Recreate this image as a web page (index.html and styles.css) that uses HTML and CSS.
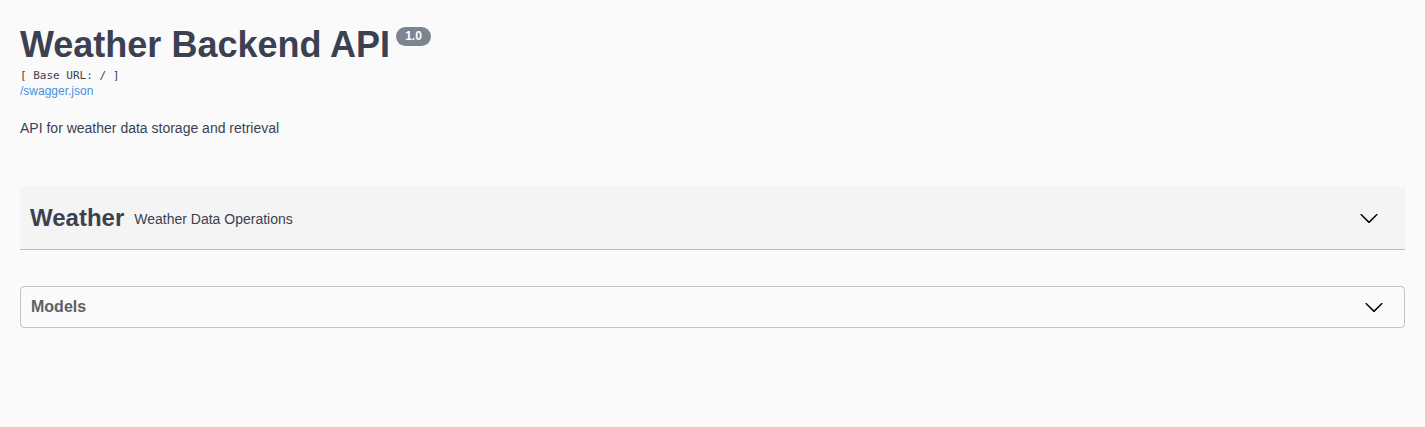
FILE: index.html
```html
<!DOCTYPE html>
<html lang="en">
<head>
<meta charset="utf-8">
<title>Weather Backend API</title>
<link rel="stylesheet" href="styles.css">
</head>
<body>
<div class="wrapper">
  <div class="info">
    <div class="title-row">
      <h2 class="title">Weather Backend API</h2>
      <span class="version">1.0</span>
    </div>
    <pre class="base-url">[ Base URL: / ]</pre>
    <a class="spec-link" href="#">/swagger.json</a>
    <p class="description">API for weather data storage and retrieval</p>
  </div>

  <div class="tag">
    <h3 class="tag-name">Weather</h3>
    <span class="tag-desc">Weather Data Operations</span>
    <span class="spacer"></span>
    <svg class="chevron chevron-tag" viewBox="0 0 20 20" width="20" height="20"><path d="M17.418 6.109c.272-.268.709-.268.979 0s.271.701 0 .969l-7.908 7.830c-.27.268-.707.268-.979 0l-7.908-7.830c-.27-.268-.27-.701 0-.969.271-.268.709-.268.979 0L10 13.25l7.418-7.141z"/></svg>
  </div>

  <div class="models">
    <h4 class="models-title">Models</h4>
    <svg class="chevron" viewBox="0 0 20 20" width="20" height="20"><path d="M17.418 6.109c.272-.268.709-.268.979 0s.271.701 0 .969l-7.908 7.830c-.27.268-.707.268-.979 0l-7.908-7.830c-.27-.268-.27-.701 0-.969.271-.268.709-.268.979 0L10 13.25l7.418-7.141z"/></svg>
  </div>
</div>
</body>
</html>
```

FILE: styles.css
```css
html, body {
  margin: 0;
  padding: 0;
  background: #fafafa;
}

body {
  font-family: "Liberation Sans", Arial, sans-serif;
  color: #3b4151;
}

.wrapper {
  padding: 0 20px;
}

.info {
  padding-top: 24px;
}

.title-row {
  display: flex;
  align-items: flex-start;
}

.title {
  margin: 0;
  font-size: 36px;
  font-weight: 700;
  line-height: 41px;
  color: #3b4151;
}

.version {
  margin: 3px 0 0 6px;
  padding: 2px 9px;
  font-size: 12px;
  font-weight: 700;
  line-height: 15px;
  color: #fff;
  background: #7d8492;
  border-radius: 57px;
}

.base-url {
  margin: 4px 0 0;
  font-family: "DejaVu Sans Mono", "Liberation Mono", monospace;
  font-size: 11px;
  line-height: 14px;
  color: #3b4151;
}

.spec-link {
  display: block;
  margin-top: 1px;
  font-size: 12px;
  line-height: 14px;
  color: #4990e2;
  text-decoration: none;
}

.description {
  margin: 22px 0 0;
  font-size: 14px;
  line-height: 16px;
  color: #3b4151;
}

.tag {
  display: flex;
  align-items: center;
  margin-top: 50px;
  height: 63px;
  padding: 0 26px 0 10px;
  background: #f4f4f4;
  border-bottom: 1px solid rgba(59, 65, 81, 0.3);
}

.tag-name {
  margin: 0;
  font-size: 24px;
  font-weight: 700;
  color: #3b4151;
  line-height: 28px;
}

.tag-desc {
  margin-left: 10px;
  font-size: 14px;
  color: #3b4151;
  line-height: 16px;
  padding-top: 2px;
}

.spacer {
  flex: 1;
}

.chevron {
  display: block;
  fill: #000;
}

.models {
  display: flex;
  align-items: center;
  justify-content: space-between;
  margin-top: 36px;
  height: 40px;
  padding: 0 20px 0 10px;
  border: 1px solid rgba(59, 65, 81, 0.3);
  border-radius: 4px;
}

.models-title {
  margin: 0;
  font-size: 16px;
  font-weight: 700;
  color: #606060;
  line-height: 20px;
}
```
